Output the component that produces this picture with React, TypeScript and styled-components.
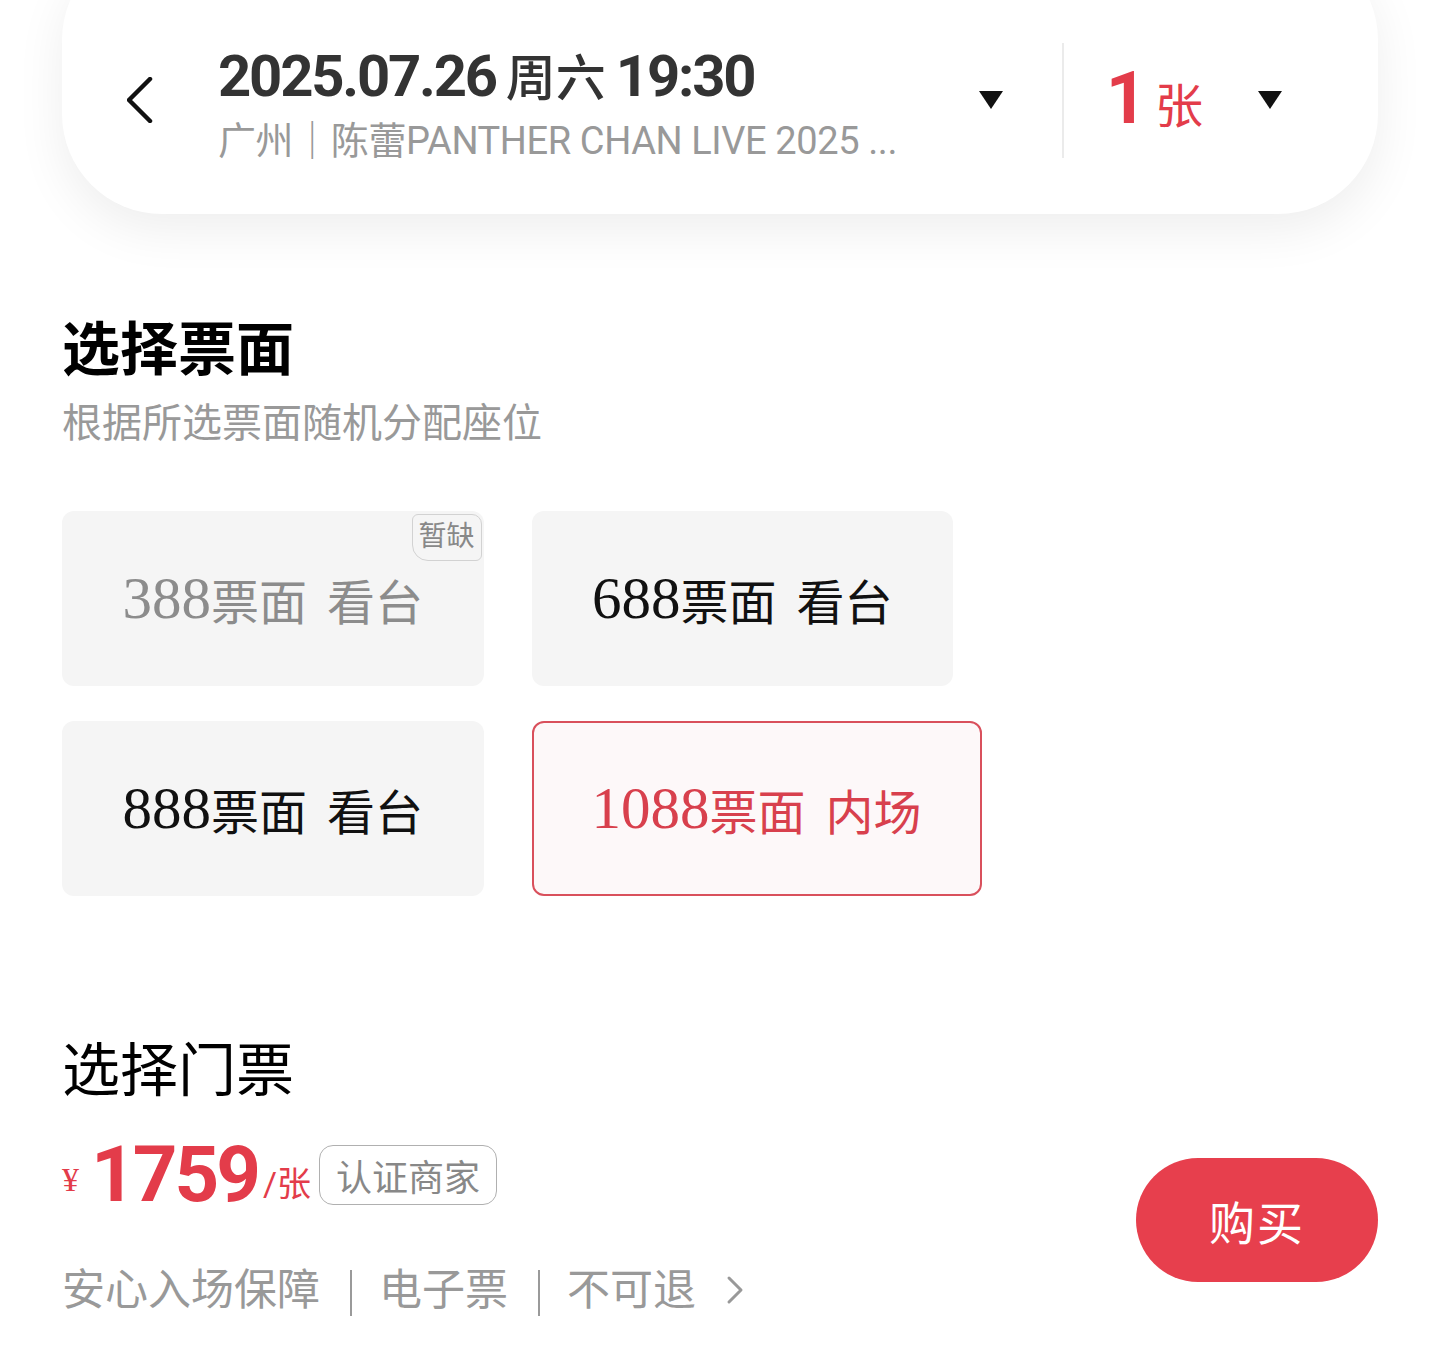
import styled, { createGlobalStyle } from "styled-components";

const RED = "#e33c4a";

const GlobalStyle = createGlobalStyle`
  html, body {
    margin: 0;
    padding: 0;
    background: #fff;
  }
  body {
    font-family: Roboto, "Noto Sans CJK SC", sans-serif;
    color: #111;
  }
`;

const Page = styled.div`
  width: 1440px;
  height: 1352px;
  overflow: hidden;
  background: #fff;
`;

const HeaderCard = styled.header`
  margin: -60px 62px 0;
  height: 274px;
  box-sizing: border-box;
  padding: 60px 96px 14px 65px;
  border-radius: 100px;
  background: #fff;
  box-shadow: 0 16px 50px rgba(0, 0, 0, 0.07);
  display: flex;
  align-items: center;
`;

const BackIcon = styled.svg`
  flex: none;
  width: 26px;
  height: 46px;
`;

const Info = styled.div`
  flex: 1;
  min-width: 0;
  margin-left: 65px;
`;

const Title = styled.div`
  font-family: Roboto, "Noto Sans CJK SC", sans-serif;
  font-size: 58px;
  font-weight: 700;
  line-height: 58px;
  letter-spacing: -2.2px;
  color: #333;
  white-space: nowrap;
  margin-top: 4px;
`;

const Weekday = styled.span`
  font-family: "Noto Sans CJK SC", sans-serif;
  font-weight: 500;
  font-size: 50px;
  letter-spacing: 0;
  margin: 0 10px;
`;

const Subtitle = styled.div`
  margin-top: 17px;
  font-size: 38px;
  line-height: 38px;
  color: #999;
  white-space: nowrap;
  letter-spacing: -0.4px;
`;

const Caret = styled.svg<{ $gap?: number }>`
  flex: none;
  width: 24px;
  height: 18px;
  margin-left: ${(p) => p.$gap ?? 0}px;
`;

const Divider = styled.div`
  flex: none;
  width: 2px;
  height: 115px;
  background: #ebebeb;
  margin: 0 42px 0 59px;
`;

const Count = styled.div`
  display: flex;
  align-items: baseline;
  color: ${RED};
`;

const CountNum = styled.span`
  font-family: Roboto, sans-serif;
  font-size: 72px;
  font-weight: 700;
  line-height: 1;
`;

const CountUnit = styled.span`
  font-family: "Noto Sans CJK SC", sans-serif;
  font-size: 48px;
  margin-left: 8px;
`;

const Content = styled.main`
  padding: 0 62px;
`;

const Heading = styled.h2<{ $bold?: boolean; $top: number }>`
  margin: ${(p) => p.$top}px 0 0;
  font-family: "Noto Sans CJK SC", sans-serif;
  font-size: 58px;
  line-height: 58px;
  font-weight: ${(p) => (p.$bold ? 700 : 400)};
  color: #000;
`;

const Hint = styled.p`
  margin: 30px 0 0;
  font-size: 40px;
  line-height: 40px;
  color: #999;
`;

const OptionGrid = styled.div`
  margin-top: 67px;
  display: grid;
  grid-template-columns: repeat(2, max-content);
  column-gap: 48px;
  row-gap: 35px;
`;

const Option = styled.div<{ $state: "off" | "normal" | "active" }>`
  position: relative;
  justify-self: start;
  height: 175px;
  box-sizing: border-box;
  padding: 0 ${(p) => (p.$state === "active" ? 58 : 60.5)}px;
  border-radius: 12px;
  display: flex;
  align-items: center;
  justify-content: center;
  white-space: nowrap;
  background: ${(p) => (p.$state === "active" ? "#fdf8f9" : "#f5f5f5")};
  border: ${(p) => (p.$state === "active" ? "2.5px solid #d9505c" : "none")};
  color: ${(p) =>
    p.$state === "off" ? "#8c8c8c" : p.$state === "active" ? "#d8404d" : "#111"};
`;

const OptionPrice = styled.span`
  font-family: "Liberation Serif", serif;
  font-size: 59px;
  line-height: 1;
`;

const OptionText = styled.span`
  font-family: "Noto Sans CJK SC", sans-serif;
  font-size: 48px;
  line-height: 1;
`;

const OptionArea = styled(OptionText)`
  margin-left: 20px;
`;

const SoldOut = styled.span`
  position: absolute;
  top: 3px;
  right: 2px;
  padding: 4px 6px 5px;
  font-size: 28px;
  line-height: 36px;
  color: #888;
  border: 1px solid #d2d2d2;
  border-radius: 6px 10px 6px 16px;
`;

const Checkout = styled.section`
  margin-top: 50px;
  display: flex;
  justify-content: space-between;
  align-items: flex-start;
`;

const PriceRow = styled.div`
  display: flex;
  align-items: center;
  height: 60px;
  color: ${RED};
`;

const Yen = styled.span`
  font-family: "Liberation Serif", serif;
  font-size: 34px;
  margin-top: 10px;
`;

const Amount = styled.span`
  font-family: Roboto, sans-serif;
  font-size: 78px;
  font-weight: 700;
  letter-spacing: -3px;
  line-height: 1;
  margin-left: 12px;
`;

const Per = styled.span`
  font-size: 34px;
  margin: 12px 8px 0 5px;
`;

const Verified = styled.span`
  height: 60px;
  box-sizing: border-box;
  padding: 0 16px;
  display: inline-flex;
  align-items: center;
  border: 1.5px solid #b0b0b0;
  border-radius: 14px;
  font-size: 36px;
  color: #888;
`;

const Perks = styled.div`
  margin-top: 59px;
  display: flex;
  align-items: center;
  font-size: 43px;
  line-height: 46px;
  color: #999;
`;

const PerkSep = styled.span`
  width: 2px;
  height: 46px;
  margin: 6px 27px 0 30px;
  background: #9a9a9a;
`;

const PerkArrow = styled.svg`
  width: 18px;
  height: 30px;
  margin-left: 30px;
`;

const BuyButton = styled.button`
  margin-top: 13px;
  width: 242px;
  height: 124px;
  border: none;
  border-radius: 62px;
  background: #e73f4d;
  color: #fff;
  font-family: "Noto Sans CJK SC", sans-serif;
  font-size: 46px;
  letter-spacing: 2px;
`;

const options: { price: string; area: string; state: "off" | "normal" | "active" }[] = [
  { price: "388", area: "看台", state: "off" },
  { price: "688", area: "看台", state: "normal" },
  { price: "888", area: "看台", state: "normal" },
  { price: "1088", area: "内场", state: "active" },
];

const CaretDown = ({ gap }: { gap?: number }) => (
  <Caret $gap={gap} viewBox="0 0 24 18">
    <polygon points="0,0 24,0 12,18" fill="#111" />
  </Caret>
);

export default function App() {
  return (
    <Page>
      <GlobalStyle />
      <HeaderCard>
        <BackIcon viewBox="0 0 26 46">
          <polyline
            points="23,2 2,23 23,44"
            fill="none"
            stroke="#111"
            strokeWidth="4.5"
            strokeLinecap="round"
            strokeLinejoin="round"
          />
        </BackIcon>
        <Info>
          <Title>
            2025.07.26<Weekday>周六</Weekday>19:30
          </Title>
          <Subtitle>广州｜陈蕾PANTHER CHAN LIVE 2025 ...</Subtitle>
        </Info>
        <CaretDown />
        <Divider />
        <Count>
          <CountNum>1</CountNum>
          <CountUnit>张</CountUnit>
        </Count>
        <CaretDown gap={55} />
      </HeaderCard>

      <Content>
        <Heading $bold $top={102}>
          选择票面
        </Heading>
        <Hint>根据所选票面随机分配座位</Hint>

        <OptionGrid>
          {options.map((o) => (
            <Option key={o.price} $state={o.state}>
              <OptionPrice>{o.price}</OptionPrice>
              <OptionText>票面</OptionText>
              <OptionArea>{o.area}</OptionArea>
              {o.state === "off" && <SoldOut>暂缺</SoldOut>}
            </Option>
          ))}
        </OptionGrid>

        <Heading $top={141}>选择门票</Heading>

        <Checkout>
          <div>
            <PriceRow>
              <Yen>¥</Yen>
              <Amount>1759</Amount>
              <Per>/张</Per>
              <Verified>认证商家</Verified>
            </PriceRow>
            <Perks>
              安心入场保障
              <PerkSep />
              电子票
              <PerkSep />
              不可退
              <PerkArrow viewBox="0 0 18 30">
                <polyline
                  points="3,3 15,15 3,27"
                  fill="none"
                  stroke="#999"
                  strokeWidth="3"
                  strokeLinecap="round"
                  strokeLinejoin="round"
                />
              </PerkArrow>
            </Perks>
          </div>
          <BuyButton>购买</BuyButton>
        </Checkout>
      </Content>
    </Page>
  );
}
